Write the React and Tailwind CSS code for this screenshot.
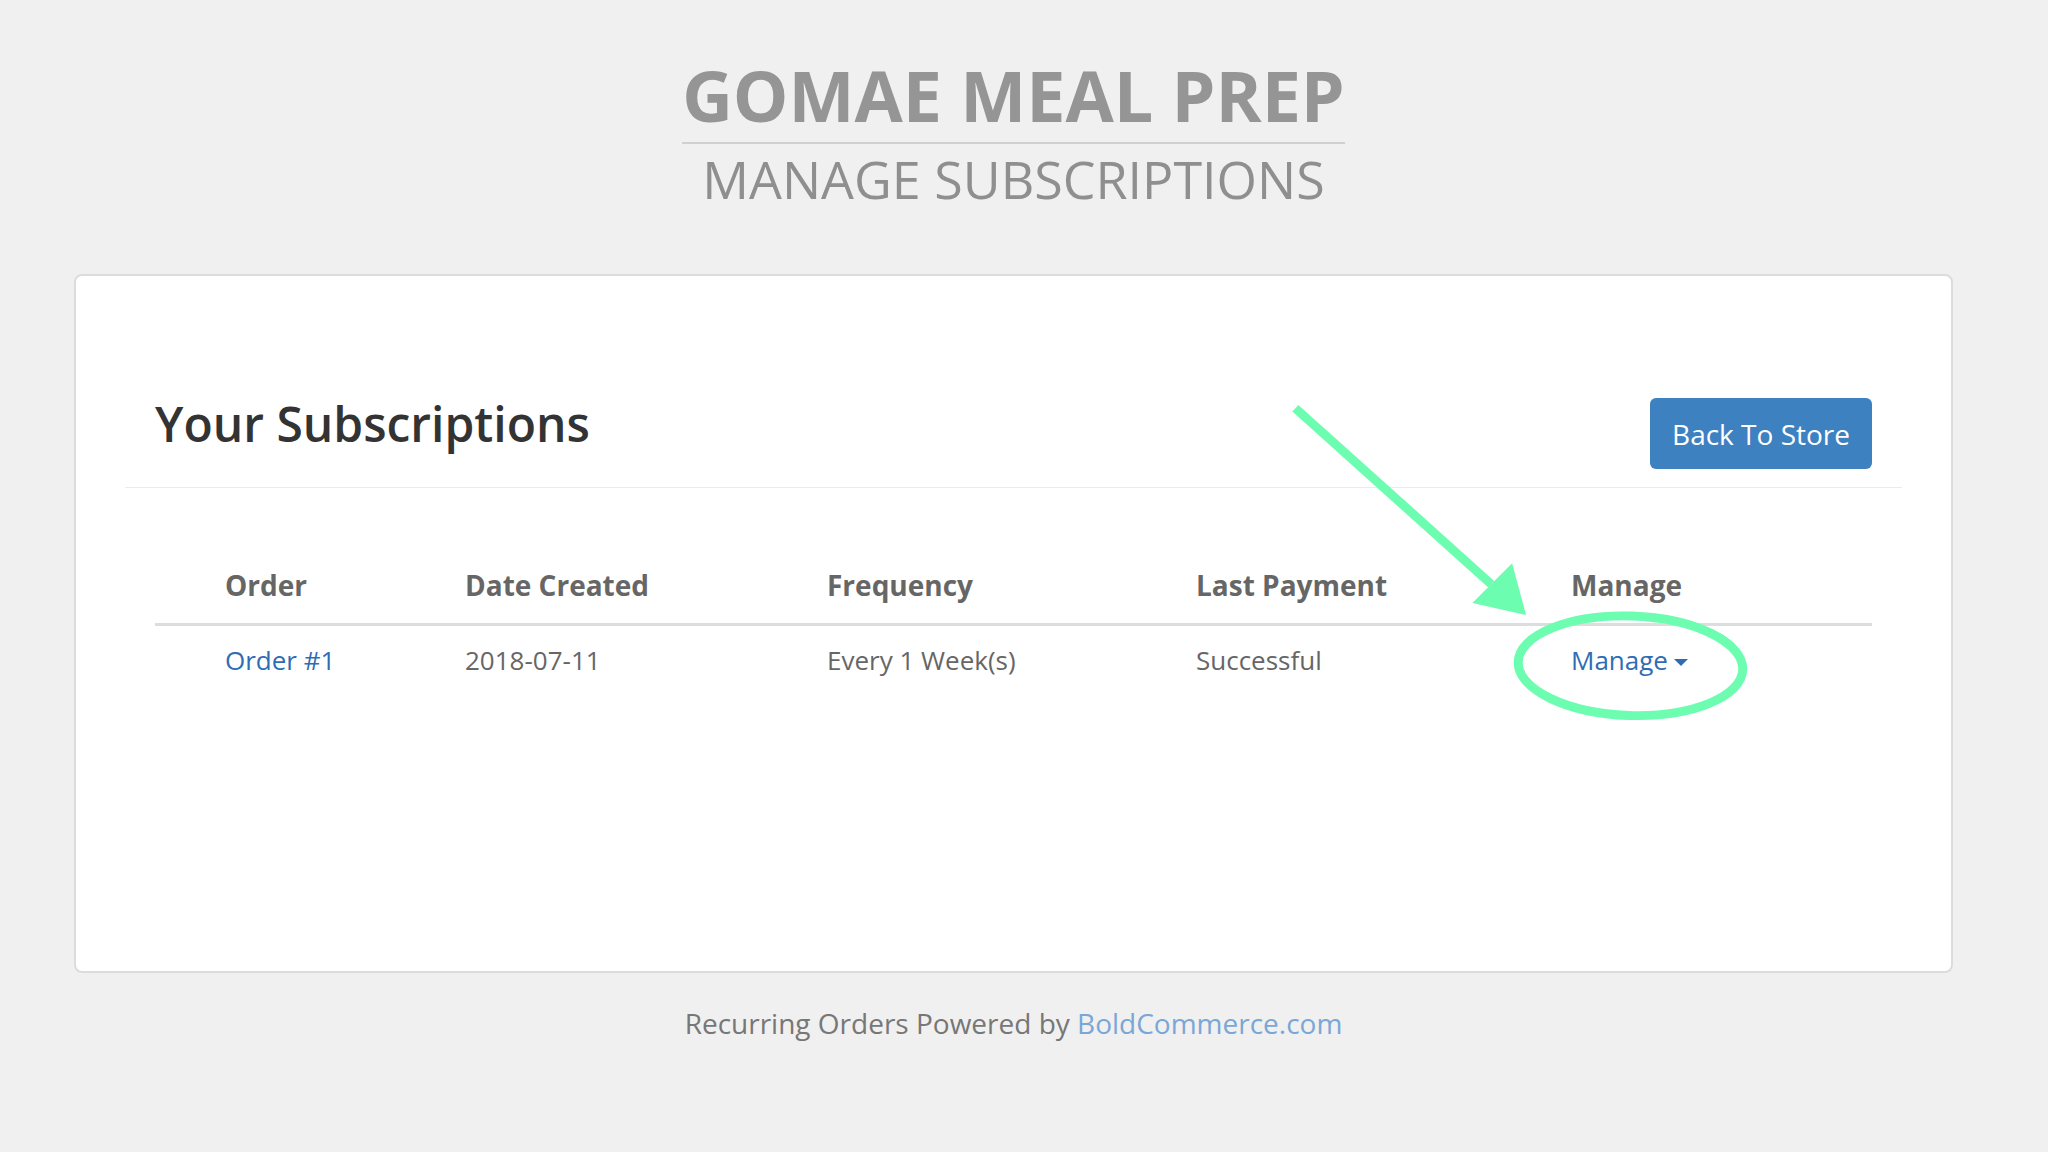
import React from 'react'

const COLUMNS = [
  { key: 'order', label: 'Order' },
  { key: 'date', label: 'Date Created' },
  { key: 'freq', label: 'Frequency' },
  { key: 'payment', label: 'Last Payment' },
  { key: 'manage', label: 'Manage' },
]

const ROWS = [
  { id: 1, order: 'Order #1', date: '2018-07-11', freq: 'Every 1 Week(s)', payment: 'Successful' },
]

function Annotation() {
  // hand-drawn green arrow + circle sitting over the card
  return (
    <svg className="absolute inset-0 w-full h-full pointer-events-none overflow-visible" viewBox="0 0 1879 699">
      <line x1="1223" y1="133" x2="1420" y2="310" stroke="#6cfdb0" strokeWidth="9" />
      <polygon points="1455,341 1401,329 1441,289" fill="#6cfdb0" />
      <ellipse cx="1560" cy="392" rx="113" ry="50" fill="none" stroke="#6cfdb0" strokeWidth="9" transform="rotate(2 1560 392)" />
    </svg>
  )
}

export default function App() {
  return (
    <div className="min-h-[1152px] bg-[#f0f0f0] font-['Open_Sans',sans-serif]">
      {/* Header */}
      <header className="flex flex-col items-center pt-[60px] ml-[74px] w-[1879px]">
        <h1 className="text-[70px] leading-none font-bold text-[#959595] pb-[12px] border-b-2 border-[#d0d0d0]">
          GOMAE MEAL PREP
        </h1>
        <h2 className="mt-[9px] text-[52px] leading-none text-[#8f8f8f]">MANAGE SUBSCRIPTIONS</h2>
      </header>

      {/* Card */}
      <main className="relative mt-[69px] ml-[74px] w-[1879px] h-[699px] bg-white border-2 border-[#dcdcdc] rounded-lg">
        <div className="px-[49px] pt-[122px]">
          <div className="flex items-start justify-between px-[30px] pb-[18px] border-b border-[#ebebeb]">
            <h3 className="text-[48px] leading-[1.1] font-semibold text-[#333]">Your Subscriptions</h3>
            <button className="h-[71px] px-[22px] rounded-md bg-[#3d81c1] text-white text-[28px]">
              Back To Store
            </button>
          </div>

          <div className="mx-[30px] mt-[78px]">
            <div className="grid grid-cols-[310px_362px_369px_375px_1fr] border-b-[3px] border-[#dddddd] pb-[18px]">
              {COLUMNS.map((c, i) => (
                <div key={c.key} className={`text-[28px] leading-[1.4] font-bold text-[#666] ${i === 0 ? 'pl-[70px]' : ''}`}>
                  {c.label}
                </div>
              ))}
            </div>
            {ROWS.map((r) => (
              <div key={r.id} className="grid grid-cols-[310px_362px_369px_375px_1fr] pt-[16px] text-[26px] leading-[1.4] text-[#666]">
                <a className="pl-[70px] text-[#2e6db4]">{r.order}</a>
                <div>{r.date}</div>
                <div>{r.freq}</div>
                <div>{r.payment}</div>
                <div className="flex items-center gap-[6px] text-[#2e6db4]">
                  Manage
                  <span className="w-0 h-0 border-l-[7px] border-r-[7px] border-t-[7px] border-l-transparent border-r-transparent border-t-[#2e6db4] mt-[4px]" />
                </div>
              </div>
            ))}
          </div>
        </div>
        <Annotation />
      </main>

      {/* Footer */}
      <footer className="mt-[31px] ml-[74px] w-[1879px] text-center text-[28px] leading-[1.4] text-[#777]">
        Recurring Orders Powered by <a className="text-[#7aa7d6]">BoldCommerce.com</a>
      </footer>
    </div>
  )
}
